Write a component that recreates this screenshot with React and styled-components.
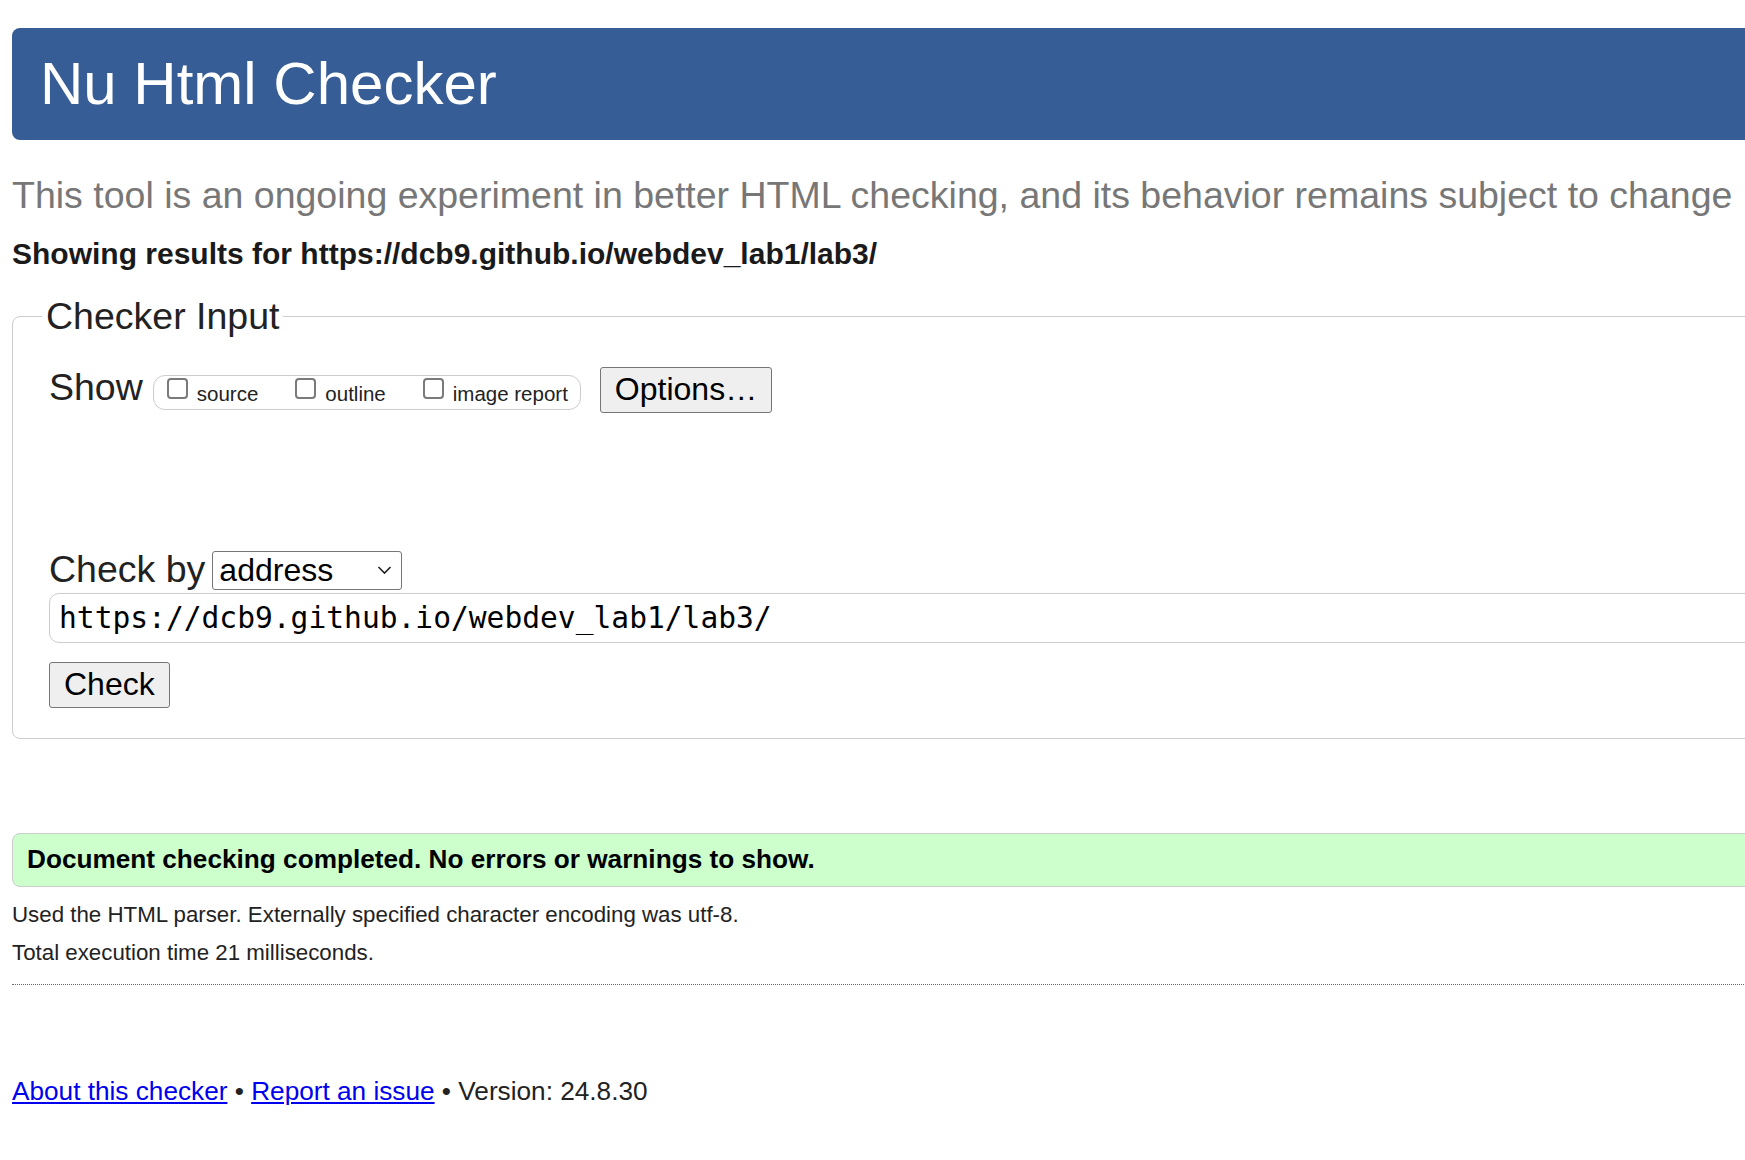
import React from 'react';
import styled, { createGlobalStyle } from 'styled-components';

const Global = createGlobalStyle`
  html, body {
    margin: 0;
    padding: 0;
    overflow: hidden;
    background: #ffffff;
  }
  body {
    font-family: "Liberation Sans", Arial, sans-serif;
    color: #222222;
  }
`;

const Page = styled.div`
  width: 1900px;
  padding: 28px 12px 40px;
`;

const Header = styled.header`
  background: #365d95;
  color: #ffffff;
  border-radius: 8px;
  padding: 20px 28px;
`;

const Title = styled.h1`
  margin: 0;
  font-size: 60px;
  font-weight: 400;
  line-height: 72px;
`;

const Tagline = styled.p`
  margin: 34px 0 0;
  font-size: 37.5px;
  color: #777777;
  white-space: nowrap;
`;

const Showing = styled.p`
  margin: 20px 0 0;
  font-size: 30px;
  font-weight: 700;
  color: #1a1a1a;
  white-space: nowrap;
`;

const Fieldset = styled.fieldset`
  margin: 24px 0 0;
  padding: 28px 0 30px 29px;
  border: 1px solid #cccccc;
  border-radius: 8px;
  min-width: 0;
`;

const Legend = styled.legend`
  padding: 0 4px;
  font-size: 37.5px;
  color: #222222;
`;

const FieldBody = styled.div`
  padding-left: 7px;
`;

const Row = styled.div`
  display: flex;
  align-items: flex-start;
  margin-top: ${(p) => p.$top || 0}px;
`;

const RowLabel = styled.span`
  font-size: 37.5px;
  margin-right: ${(p) => p.$gap}px;
  color: #222222;
`;

const Pill = styled.div`
  margin-top: 9px;
  display: flex;
  align-items: flex-end;
  gap: 37px;
  padding: 2px 12px 3px 13px;
  border: 1px solid #cccccc;
  border-radius: 12px;
`;

const OptionItem = styled.label`
  display: flex;
  align-items: flex-end;
  gap: 9px;
  font-size: 20.5px;
  color: #222222;
  white-space: nowrap;
`;

const Checkbox = styled.input`
  appearance: none;
  box-sizing: border-box;
  width: 21px;
  height: 21px;
  margin: 0 0 7px;
  border: 2px solid #7a7a7a;
  border-radius: 4px;
  background: #ffffff;
`;

const Button = styled.button`
  font-family: "Liberation Sans", Arial, sans-serif;
  font-size: 32px;
  line-height: normal;
  padding: 3px 14px 4px;
  margin-left: ${(p) => p.$left || 0}px;
  margin-top: ${(p) => p.$top || 0}px;
  border: 1px solid #767676;
  border-radius: 3px;
  background: #efefef;
  color: #000000;
`;

const SelectWrap = styled.div`
  position: relative;
  margin-top: 3px;
`;

const Select = styled.select`
  appearance: none;
  box-sizing: border-box;
  width: 190px;
  height: 39px;
  padding: 0 30px 0 6px;
  font-family: "Liberation Sans", Arial, sans-serif;
  font-size: 32px;
  border: 1px solid #767676;
  border-radius: 3px;
  background: #ffffff;
  color: #000000;
`;

const Chevron = styled.svg`
  position: absolute;
  right: 10px;
  top: 50%;
  transform: translateY(-50%);
  pointer-events: none;
`;

const UrlInput = styled.input`
  display: block;
  box-sizing: border-box;
  width: 100%;
  margin-top: 2px;
  padding: 7px 9px;
  font-family: "DejaVu Sans Mono", "Liberation Mono", monospace;
  font-size: 29.6px;
  color: #000000;
  border: 1px solid #cccccc;
  border-radius: 10px;
  background: #ffffff;
`;

const ButtonRow = styled.div`
  margin-top: 19px;
`;

const Result = styled.div`
  margin-top: 94px;
  padding: 10.5px 14px;
  background: #ccffcc;
  border: 1px solid #cccccc;
  border-radius: 8px;
  font-size: 26.2px;
  font-weight: 700;
  color: #000000;
`;

const Info = styled.p`
  margin: ${(p) => p.$top}px 0 0;
  font-size: 22.3px;
  color: #222222;
`;

const Rule = styled.hr`
  margin: 18px 0 0;
  border: 0;
  border-top: 1px dotted #666666;
  height: 0;
`;

const Footer = styled.p`
  margin: 91px 0 0;
  font-size: 26.2px;
  color: #222222;
`;

const Link = styled.a`
  color: #0000ee;
  text-decoration: underline;
`;

export default function App() {
  return (
    <>
      <Global />
      <Page>
        <Header>
          <Title>Nu Html Checker</Title>
        </Header>
        <Tagline>
          This tool is an ongoing experiment in better HTML checking, and its behavior remains subject to change
        </Tagline>
        <Showing>Showing results for https://dcb9.github.io/webdev_lab1/lab3/</Showing>

        <Fieldset>
          <Legend>Checker Input</Legend>
          <FieldBody>
            <Row>
              <RowLabel $gap={10}>Show</RowLabel>
              <Pill>
                <OptionItem>
                  <Checkbox type="checkbox" />
                  source
                </OptionItem>
                <OptionItem>
                  <Checkbox type="checkbox" />
                  outline
                </OptionItem>
                <OptionItem>
                  <Checkbox type="checkbox" />
                  image report
                </OptionItem>
              </Pill>
              <Button type="button" $left={19} $top={1}>Options…</Button>
            </Row>

            <Row $top={134.5}>
              <RowLabel $gap={7}>Check by</RowLabel>
              <SelectWrap>
                <Select defaultValue="address">
                  <option value="address">address</option>
                  <option value="file">file upload</option>
                  <option value="text">text input</option>
                </Select>
                <Chevron width="15" height="9" viewBox="0 0 15 9">
                  <path d="M1.5 1.5 L7.5 7.5 L13.5 1.5" fill="none" stroke="#222" strokeWidth="1.6" />
                </Chevron>
              </SelectWrap>
            </Row>

            <UrlInput type="url" defaultValue="https://dcb9.github.io/webdev_lab1/lab3/" />
            <ButtonRow>
              <Button type="button">Check</Button>
            </ButtonRow>
          </FieldBody>
        </Fieldset>

        <Result>Document checking completed. No errors or warnings to show.</Result>
        <Info $top={15}>Used the HTML parser. Externally specified character encoding was utf-8.</Info>
        <Info $top={12.5}>Total execution time 21 milliseconds.</Info>
        <Rule />

        <Footer>
          <Link href="#about">About this checker</Link> • <Link href="#issue">Report an issue</Link> • Version: 24.8.30
        </Footer>
      </Page>
    </>
  );
}
